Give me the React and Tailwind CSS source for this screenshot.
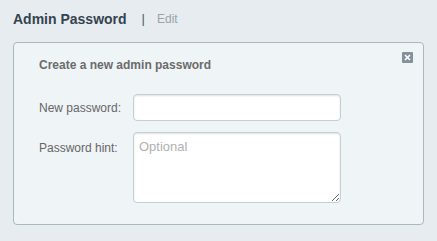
const App = () => {
  return (
    <div
      className="w-[437px] h-[241px] bg-[#e6ecf0] overflow-hidden"
      style={{ fontFamily: '"Liberation Sans", Arial, sans-serif' }}
    >
      <div className="flex items-center h-[37px] pl-[13px] pt-[1px]">
        <h1 className="text-[14px] font-bold text-[#34434f]">Admin Password</h1>
        <span className="ml-[15px] text-[13px] text-[#4d5c68]">|</span>
        <span className="ml-[12px] text-[12px] text-[#9aa3aa]">Edit</span>
      </div>

      <div className="relative mx-[13px] mt-[5px] h-[183px] bg-[#eff4f7] border border-[#a9b8c1] rounded-[4px]">
        <button className="absolute right-[10px] top-[9px] w-[11px] h-[11px] bg-[#84919a] flex items-center justify-center rounded-[1px]">
          <svg width="7" height="7" viewBox="0 0 7 7">
            <path d="M1 1L6 6M6 1L1 6" stroke="#fff" strokeWidth="1.6" />
          </svg>
        </button>

        <div className="pl-[25px] pt-[14px]">
          <h2 className="text-[12px] font-bold text-[#6b6b6b] leading-[16px]">Create a new admin password</h2>

          <div className="flex items-center mt-[21px]">
            <label className="w-[94px] text-[12px] text-[#666]">New password:</label>
            <input
              type="password"
              className="w-[208px] h-[27px] bg-white border border-[#c3cfd5] rounded-[4px] shadow-[inset_0_1px_2px_rgba(0,0,0,0.12)] outline-none"
            />
          </div>

          <div className="flex items-start mt-[11px]">
            <label className="w-[94px] text-[12px] text-[#666] pt-[7px]">Password hint:</label>
            <textarea
              placeholder="Optional"
              className="w-[208px] h-[71px] bg-white border border-[#c3cfd5] rounded-[4px] shadow-[inset_0_1px_2px_rgba(0,0,0,0.12)] outline-none px-[5px] pt-[4px] text-[13px] placeholder:text-[#b0b0b0]"
            />
          </div>
        </div>
      </div>
    </div>
  );
};

export default App;
